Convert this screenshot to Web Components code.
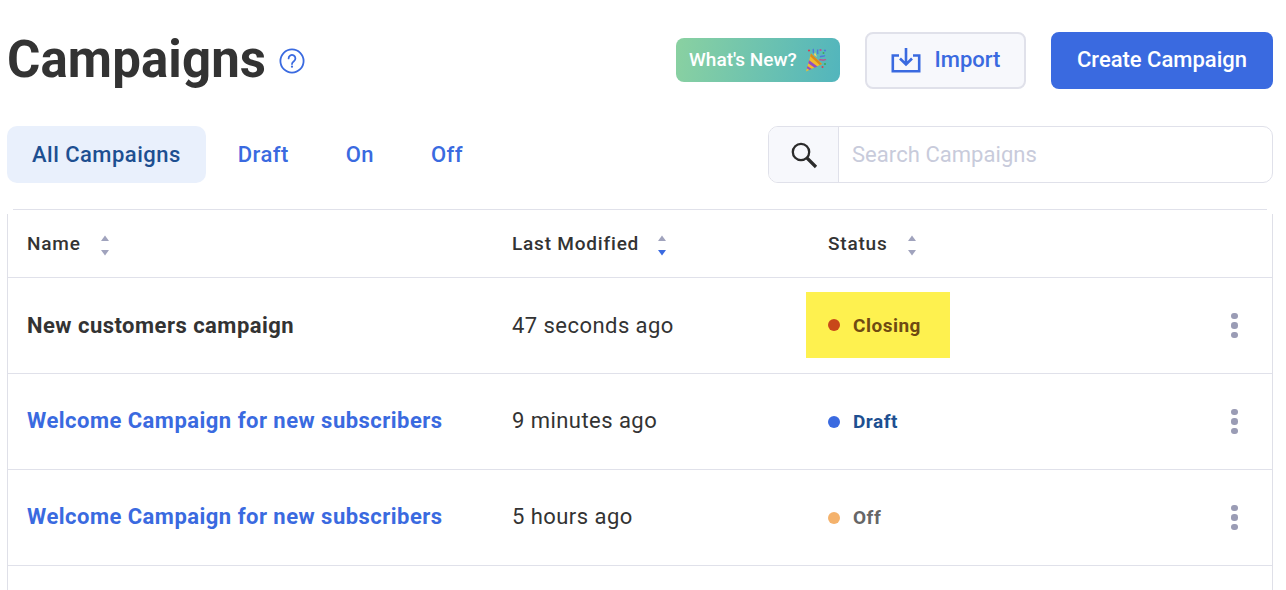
<!DOCTYPE html>
<html lang="en">
<head>
<meta charset="utf-8">
<title>Campaigns</title>
<style>
  html, body { margin: 0; height: 590px; overflow: hidden; background: #fff; }
  body { font-family: Roboto, "Liberation Sans", sans-serif; color: #333; }
</style>
</head>
<body>
<campaigns-page>
  <page-header title-text="Campaigns"></page-header>
  <filter-bar></filter-bar>
  <campaign-table>
    <campaign-row name="New customers campaign" modified="47 seconds ago" status="Closing" kind="closing" plain></campaign-row>
    <campaign-row name="Welcome Campaign for new subscribers" modified="9 minutes ago" status="Draft" kind="draft"></campaign-row>
    <campaign-row name="Welcome Campaign for new subscribers" modified="5 hours ago" status="Off" kind="off"></campaign-row>
    <campaign-row last></campaign-row>
  </campaign-table>
</campaigns-page>

<script>
(() => {
  const define = (tag, html, setup) => {
    customElements.define(tag, class extends HTMLElement {
      connectedCallback() {
        if (this.shadowRoot) return;
        const root = this.attachShadow({ mode: "open" });
        root.innerHTML = html;
        if (setup) setup(root, this);
      }
    });
  };

  define("campaigns-page", `
    <style>
      :host { display: block; box-sizing: border-box; height: 590px; overflow: hidden; padding: 32px 13px 0 7px; }
    </style>
    <slot></slot>
  `);

  define("page-header", `
    <style>
      :host { display: flex; align-items: center; height: 57px; }
      h1 { margin: -3px 0 0; font-size: 51px; font-weight: 700; line-height: 57px; color: #333; letter-spacing: .1px; }
      .help { display: block; margin: 1px 0 0 13px; }
      .actions { margin-left: auto; display: flex; align-items: center; margin-top: -1px; }
      .btn { box-sizing: border-box; display: flex; align-items: center; justify-content: center; font-weight: 500; font-size: 22px; padding-bottom: 1px; }
      .new { width: 164px; height: 44px; border-radius: 8px; color: #fff; font-size: 19px; gap: 8px; background: linear-gradient(100deg, #8ad1a1, #52b5bd); }
      .import { width: 161px; height: 57px; margin-left: 25px; border: 2px solid #e0e1ea; border-radius: 8px; background: #f7f8fc; color: #3a6ae0; gap: 14px; }
      .create { width: 222px; height: 57px; margin-left: 25px; border-radius: 8px; background: #3a6ae0; color: #fff; }
    </style>
    <h1 id="title"></h1>
    <svg class="help" width="26" height="26" viewBox="0 0 26 26" fill="none" stroke="#3a6ae0" stroke-width="1.8">
      <circle cx="13" cy="13" r="11.6"/>
      <path d="M9.6 10.4a3.4 3.4 0 1 1 5.3 2.8c-1.2.8-1.9 1.4-1.9 2.9" stroke-linecap="round"/>
      <circle cx="13" cy="18.7" r="1.1" fill="#3a6ae0" stroke="none"/>
    </svg>
    <div class="actions">
      <div class="btn new">What's New?
        <svg width="22" height="24" viewBox="0 0 22 24">
          <path d="M1 23.5 L6 5.5 L17 16 Z" fill="#f0bb2e"/>
          <path d="M6 5.5 L17 16 L14.6 17 L5.2 8.2 Z" fill="#d98a1e"/>
          <path d="M4.1 12.2 L12.5 18.6 L9.6 19.8 L3.2 15.3 Z" fill="#8f4fc4"/>
          <path d="M2.5 18 L6.8 21 L4.4 22.1 L1.8 20.3 Z" fill="#8f4fc4"/>
          <path d="M9 7 L12 9 L10 4 Z" fill="#f7d560"/>
          <path d="M8 1 C9 2.5 7.5 3.5 8.8 5 M12.5 1.5 C13 3 12 4 13 6 M15 9 C16.5 7.5 18 9 20 7.5" fill="none" stroke="#4f79d8" stroke-width="1.4"/>
          <path d="M14 12 C16 11 17.5 13 21 11.5" fill="none" stroke="#c84a8e" stroke-width="1.3"/>
          <circle cx="4" cy="2.5" r="1.1" fill="#d8404f"/><circle cx="15.5" cy="2" r="1.1" fill="#c84a8e"/>
          <circle cx="20" cy="2.5" r="1.1" fill="#4f79d8"/><circle cx="18.5" cy="5" r="1" fill="#3fa85a"/>
          <circle cx="20" cy="16" r="1.1" fill="#3fa85a"/><circle cx="17.5" cy="19" r="1" fill="#d8404f"/>
        </svg>
      </div>
      <div class="btn import">
        <svg width="30" height="26" viewBox="0 0 30 26" fill="none" stroke="#3a6ae0" stroke-width="2.6">
          <path d="M8 8.5H1.8V24.2H28.2V8.5H22"/>
          <path d="M15 1V17M9 11.5L15 17.5L21 11.5"/>
        </svg>
        <span>Import</span>
      </div>
      <div class="btn create">Create Campaign</div>
    </div>
  `, (root, host) => {
    root.getElementById("title").textContent = host.getAttribute("title-text");
  });

  define("filter-bar", `
    <style>
      :host { display: flex; align-items: center; margin-top: 37px; height: 57px; }
      .tab { display: flex; align-items: center; height: 57px; padding: 0 25px; margin-right: 6.9px; border-radius: 10px;
             font-size: 22px; font-weight: 500; color: #3a6ae0; letter-spacing: .48px; }
      .tab.on { background: #e9f0fc; color: #1d4f91; }
      .search { margin-left: auto; box-sizing: border-box; width: 505px; height: 57px; display: flex; border: 1px solid #e0e1ea; border-radius: 10px; overflow: hidden; }
      .glass { width: 69px; display: flex; align-items: center; justify-content: center; background: #f7f8fc; border-right: 1px solid #e0e1ea; }
      .hint { padding-left: 13px; display: flex; align-items: center; font-size: 22px; color: #c8cbdb; letter-spacing: .05px; }
    </style>
    <div class="tab on">All Campaigns</div>
    <div class="tab">Draft</div>
    <div class="tab">On</div>
    <div class="tab">Off</div>
    <div class="search">
      <div class="glass">
        <svg width="28" height="28" viewBox="0 0 28 28" fill="none" stroke="#2b2b2b">
          <circle cx="11" cy="11" r="8.2" stroke-width="2.3"/>
          <path d="M17 17L26 26" stroke-width="3.2"/>
        </svg>
      </div>
      <div class="hint">Search Campaigns</div>
    </div>
  `);

  const sortIcon = (active) => `
    <svg width="10" height="24" viewBox="0 0 10 24">
      <path d="M5 1.5L9 7H1Z" fill="#a0a3bd"/>
      <path d="M5 21.5L9 16H1Z" fill="${active ? "#3a6ae0" : "#a0a3bd"}"/>
    </svg>`;

  define("campaign-table", `
    <style>
      :host { display: block; margin-top: 26px; }
      .cap { height: 1px; margin: 0 6px; background: #e0e1ea; }
      .frame { margin-top: 4px; border: solid #dfe0e8; border-width: 0 1px; }
      .head { display: grid; grid-template-columns: 504px 316px 1fr; align-items: center; height: 63px; border-bottom: 1px solid #e0e1ea;
              font-size: 19px; font-weight: 500; color: #333; letter-spacing: .8px; }
      .head div { display: flex; align-items: center; gap: 19px; }
      .head div:first-child { padding-left: 19px; }
      .head div:nth-child(2) { gap: 18px; }
      .head span { padding-bottom: 4px; }
    </style>
    <div class="cap"></div>
    <div class="frame">
      <div class="head">
        <div><span>Name</span>${sortIcon(false)}</div>
        <div><span>Last Modified</span>${sortIcon(true)}</div>
        <div><span>Status</span>${sortIcon(false)}</div>
      </div>
      <slot></slot>
    </div>
  `);

  define("campaign-row", `
    <style>
      :host { display: grid; grid-template-columns: 504px 316px 1fr 76px; align-items: center; height: 95px; border-bottom: 1px solid #e0e1ea; }
      /* only the top of this row fits in the window */
      :host([last]) { height: 24px; border-bottom: 0; }
      .name { padding-left: 19px; font-size: 22px; font-weight: 700; color: #3a6ae0; letter-spacing: .48px; }
      :host(:not([plain])) .name, :host(:not([plain])) .when { margin-top: -2px; }
      :host([plain]) .name { color: #333; }
      .when { font-size: 22px; color: #333; letter-spacing: .45px; }
      .state { display: flex; align-items: center; gap: 13px; font-size: 19px; font-weight: 700; letter-spacing: .5px; }
      .dot { width: 12px; height: 12px; border-radius: 50%; }
      :host([kind="draft"]) .dot { background: #3a6ae0; }
      :host([kind="draft"]) .state { color: #1d4f91; }
      :host([kind="off"]) .dot { background: #f4b26c; }
      :host([kind="off"]) .state { color: #666; }
      /* the highlight sits behind the cell and overhangs it to the left */
      :host([kind="closing"]) .state { width: 144px; height: 66px; margin: -2px 0 0 -22px; padding: 2px 0 0 22px; box-sizing: border-box; background: #fef14f; color: #6f4a12; }
      :host([kind="closing"]) .dot { background: #c8481a; margin-top: -1px; }
      .more { justify-self: center; display: flex; flex-direction: column; gap: 3.4px; margin-left: 1px; }
      .more i { display: block; width: 6.4px; height: 6.4px; border-radius: 50%; background: #9a9cb5; }
    </style>
    <div class="name" id="name"></div>
    <div class="when" id="when"></div>
    <div class="state" id="state"></div>
    <div class="more" id="more"></div>
  `, (root, host) => {
    const status = host.getAttribute("status");
    if (!status) return;
    root.getElementById("name").textContent = host.getAttribute("name");
    root.getElementById("when").textContent = host.getAttribute("modified");
    const state = root.getElementById("state");
    state.innerHTML = `<span class="dot"></span><span></span>`;
    state.lastChild.textContent = status;
    root.getElementById("more").innerHTML = "<i></i><i></i><i></i>";
  });
})();
</script>
</body>
</html>
